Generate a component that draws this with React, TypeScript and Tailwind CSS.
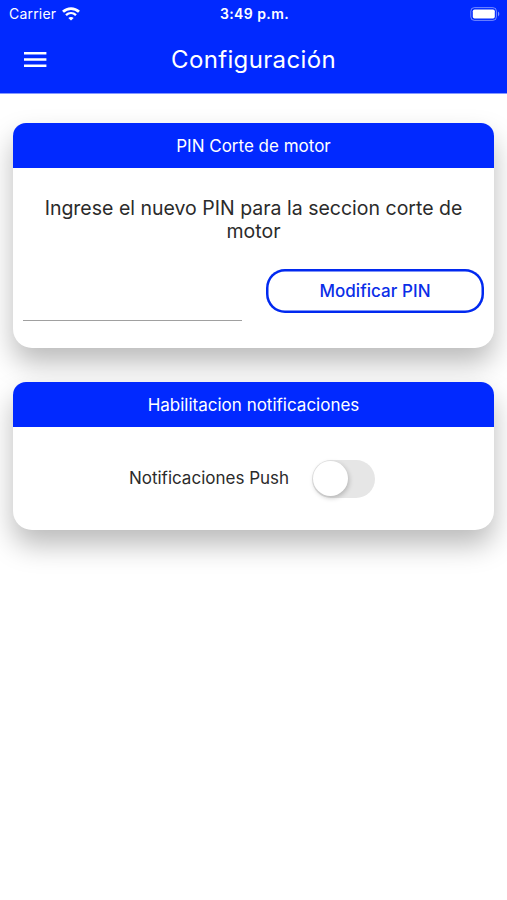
import { useState, type ReactNode } from "react";

function StatusBar() {
  return (
    <div className="grid h-[27px] grid-cols-3 items-center pl-[9px] pr-[7px] text-white">
      <div className="flex items-center gap-[6px]">
        <span className="text-[14px] leading-none tracking-[0.2px]">Carrier</span>
        <svg width="18" height="14" viewBox="0 0 18 14" fill="none" stroke="currentColor">
          <path d="M1 4.8C5.6 0.5 12.4 0.5 17 4.8" strokeWidth="2.8" />
          <path d="M4 8.1C6.9 5.5 11.1 5.5 14 8.1" strokeWidth="2.4" />
          <path d="M9 13.6L6.3 10.9C7.8 9.6 10.2 9.6 11.7 10.9Z" fill="currentColor" stroke="none" />
        </svg>
      </div>
      <span className="text-center text-[14px] font-semibold leading-none tracking-[0.4px]">
        3:49 p.m.
      </span>
      <svg className="justify-self-end" width="30" height="14" viewBox="0 0 30 14" fill="none">
        <rect x="0.8" y="0.6" width="25.6" height="12.8" rx="3.6" stroke="white" strokeOpacity="0.45" />
        <rect x="2.8" y="2.4" width="22" height="9.2" rx="1.8" fill="white" />
        <path d="M28 4.6C29.8 5.4 29.8 8.6 28 9.4Z" fill="white" fillOpacity="0.5" />
      </svg>
    </div>
  );
}

function Header() {
  return (
    <header className="h-[94px] border-b border-[#8599ff] bg-[#0129ff] text-white">
      <StatusBar />
      <div className="grid h-[66px] grid-cols-[60px_1fr_60px] items-center">
        <button type="button" aria-label="Menu" className="pl-6">
          <svg width="23" height="16" viewBox="0 0 23 16" fill="currentColor">
            <path d="M0 0h22.4v2.6H0zM0 6.2h22.4v2.6H0zM0 12.4h22.4V15H0z" />
          </svg>
        </button>
        <h1 className="text-center text-[24px] font-normal leading-none tracking-[0.35px]">
          Configuración
        </h1>
      </div>
    </header>
  );
}

function Card({ title, children }: { title: string; children: ReactNode }) {
  return (
    <section className="overflow-hidden rounded-t-[13px] rounded-b-[19px] bg-white shadow-[0_15px_28px_rgba(0,0,0,0.27)]">
      <h2 className="h-[45px] bg-[#0129ff] text-center text-[17px] font-normal leading-[46px] text-white">
        {title}
      </h2>
      {children}
    </section>
  );
}

export default function App() {
  const [push, setPush] = useState(false);

  return (
    <div className="min-h-[900px] w-[507px] bg-white font-['Inter','Liberation_Sans',sans-serif] text-[#2b2b2b]">
      <Header />

      <main className="flex flex-col gap-[34px] px-[13px] pt-[29px]">
        <Card title="PIN Corte de motor">
          <div className="h-[180px] px-[10px] pt-[29px]">
            <p className="px-3 text-center text-[19.5px] leading-[23px]">
              Ingrese el nuevo PIN para la seccion corte de motor
            </p>
            <div className="mt-[26px] flex gap-[24px]">
              <input
                type="password"
                className="h-[52px] w-[219px] border-b border-[#a0a0a0] outline-none"
              />
              <button
                type="button"
                className="h-[44px] flex-1 rounded-[19px] text-[17px] font-medium leading-[44px] tracking-[0.05px] text-[#0a2ee8] shadow-[inset_0_0_0_2.5px_#0129f0]"
              >
                Modificar PIN
              </button>
            </div>
          </div>
        </Card>

        <Card title="Habilitacion notificaciones">
          <div className="flex h-[103px] items-center justify-center gap-[23px] pr-[3px]">
            <span className="text-[17px] leading-[25px]">Notificaciones Push</span>
            <button
              type="button"
              role="switch"
              aria-checked={push}
              onClick={() => setPush(!push)}
              className={`flex h-[38px] w-[63px] items-center rounded-full p-[1px] ${
                push ? "justify-end bg-[#0129ff]" : "justify-start bg-[#e6e6e6]"
              }`}
            >
              <span className="size-[35px] rounded-full bg-white shadow-[1px_2px_5px_rgba(0,0,0,0.22)]" />
            </button>
          </div>
        </Card>
      </main>
    </div>
  );
}
